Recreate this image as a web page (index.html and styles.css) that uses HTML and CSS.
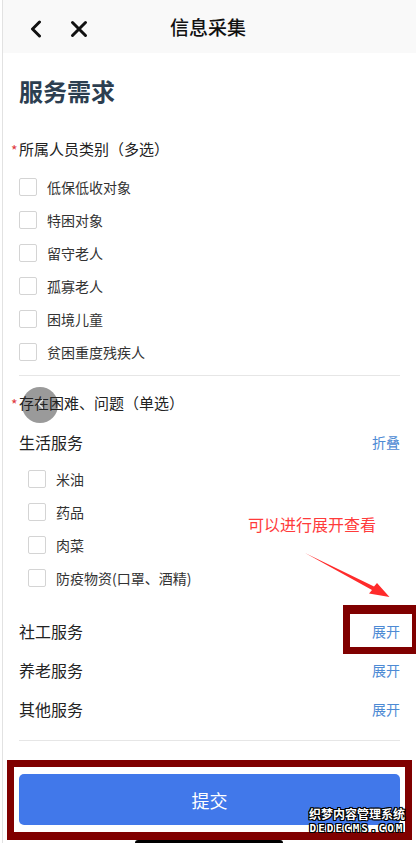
FILE: index.html
```html
<!DOCTYPE html>
<html>
<head>
  <meta charset="utf-8">
  <meta name="viewport" content="width=device-width, initial-scale=1">
  <title>信息采集</title>
  <link rel="stylesheet" href="styles.css">
</head>
<body>
  <div class="page">
    <div class="header">
      <button class="nav-btn back-btn" aria-label="返回">
        <svg width="14" height="18" viewBox="0 0 14 18"><path d="M10.5 2 L3.5 9 L10.5 16" fill="none" stroke="#111" stroke-width="3" stroke-linecap="round" stroke-linejoin="round"/></svg>
      </button>
      <button class="nav-btn close-btn" aria-label="关闭">
        <svg width="18" height="18" viewBox="0 0 18 18"><path d="M2.5 2.5 L15.5 15.5 M15.5 2.5 L2.5 15.5" fill="none" stroke="#111" stroke-width="3" stroke-linecap="round"/></svg>
      </button>
      <h1>信息采集</h1>
    </div>

    <div class="content">
      <h2 class="section-title">服务需求</h2>

      <div class="field-label"><span class="required">*</span>所属人员类别（多选）</div>
      <ul class="check-list">
        <li><span class="checkbox"></span>低保低收对象</li>
        <li><span class="checkbox"></span>特困对象</li>
        <li><span class="checkbox"></span>留守老人</li>
        <li><span class="checkbox"></span>孤寡老人</li>
        <li><span class="checkbox"></span>困境儿童</li>
        <li><span class="checkbox"></span>贫困重度残疾人</li>
      </ul>

      <div class="divider"></div>

      <div class="field-label label-second"><span class="required">*</span>存在困难、问题（单选）</div>

      <div class="group-row group-open">
        <span>生活服务</span>
        <a class="toggle">折叠</a>
      </div>
      <ul class="check-list sub-list">
        <li><span class="checkbox"></span>米油</li>
        <li><span class="checkbox"></span>药品</li>
        <li><span class="checkbox"></span>肉菜</li>
        <li><span class="checkbox"></span>防疫物资(口罩、酒精)</li>
      </ul>

      <div class="group-row first-closed">
        <span>社工服务</span>
        <a class="toggle">展开</a>
      </div>
      <div class="group-row">
        <span>养老服务</span>
        <a class="toggle">展开</a>
      </div>
      <div class="group-row">
        <span>其他服务</span>
        <a class="toggle">展开</a>
      </div>

      <div class="divider divider-bottom"></div>

      <div class="submit-wrap">
        <button class="submit-btn">提交</button>
      </div>
    </div>

    <!-- overlays -->
    <div class="touch-dot"></div>
    <svg class="touch-chevron" width="10" height="12" viewBox="0 0 10 12"><path d="M7 1.5 L2.5 6 L7 10.5" fill="none" stroke="#fff" stroke-width="1.4" opacity="0.8"/></svg>
    <div class="note">可以进行展开查看</div>
    <svg class="note-arrow" width="416" height="843" viewBox="0 0 416 843">
      <polygon points="305,553 374,586.5 377,583 389.5,597 369,593.5 372,590" fill="#ff2b2b"/>
    </svg>
    <div class="mark-box mark-toggle"></div>
    <div class="mark-box mark-submit"></div>
    <div class="watermark">
      <div class="wm-cn">织梦内容管理系统</div>
      <div class="wm-en">DEDECMS.COM</div>
    </div>
    <div class="home-bar"></div>
  </div>
</body>
</html>
```

FILE: styles.css
```css
html, body {
  margin: 0;
  padding: 0;
  background: #fff;
}

body {
  font-family: "Noto Sans CJK SC", "Noto Sans", sans-serif;
  color: #333;
  width: 416px;
  height: 843px;
  overflow: hidden;
}

.page {
  position: relative;
  z-index: 0;
  height: 843px;
  margin-left: 2px;
  border-left: 1px solid #e2e2e2;
}

.header {
  height: 53px;
  background: #f9f9f9;
  display: flex;
  align-items: center;
  position: relative;
}

.header h1 {
  position: absolute;
  left: 0;
  right: 0;
  margin: 0;
  text-align: center;
  font-size: 19px;
  font-weight: 500;
  color: #111;
  line-height: 53px;
  pointer-events: none;
  padding-right: 3px;
}

.nav-btn {
  background: none;
  border: none;
  padding: 0;
  display: flex;
  align-items: center;
  justify-content: center;
  cursor: pointer;
}

.back-btn {
  margin-left: 24px;
  width: 18px;
  height: 24px;
  margin-top: 4px;
}

.close-btn {
  margin-left: 24px;
  width: 20px;
  height: 24px;
  margin-top: 5px;
}

.content {
  padding: 0 14px 0 16px;
}

.section-title {
  margin: 22px 0 0;
  font-size: 24px;
  line-height: 32px;
  font-weight: 700;
  color: #2c3e50;
}

.field-label {
  position: relative;
  margin-top: 31px;
  font-size: 15px;
  line-height: 22px;
  color: #222;
}

.label-second {
  margin-top: 16px;
}

.required {
  position: absolute;
  left: -8px;
  top: 1px;
  color: #e0383e;
  font-size: 14px;
}

.check-list {
  list-style: none;
  margin: 10px 0 0;
  padding: 0;
}

.check-list li {
  height: 33px;
  display: flex;
  align-items: center;
  font-size: 14px;
  color: #333;
}

.checkbox {
  width: 16px;
  height: 16px;
  border: 1px solid #d4d4d4;
  border-radius: 2px;
  background: #fff;
  margin-right: 10px;
}

.divider {
  height: 1px;
  background: #e6e6e6;
  margin-top: 7px;
  margin-right: 2px;
}

.group-row {
  height: 39px;
  display: flex;
  align-items: center;
  justify-content: space-between;
  font-size: 16px;
  color: #222;
  padding-right: 2px;
}

.group-open {
  margin-top: 8px;
}

.first-closed {
  margin-top: 17px;
}

.toggle {
  font-size: 14px;
  color: #4d8ad4;
  cursor: pointer;
}

.sub-list {
  margin-top: 1px;
  padding-left: 9px;
}

.divider-bottom {
  margin-top: 12px;
}

.submit-wrap {
  padding-top: 33px;
  padding-right: 2px;
}

.submit-btn {
  width: 100%;
  height: 51px;
  border: none;
  border-radius: 5px;
  background: #4178ea;
  color: #fff;
  font-family: inherit;
  font-size: 18px;
  cursor: pointer;
}

/* overlays */
.touch-dot {
  position: absolute;
  z-index: -1;
  left: 19px;
  top: 387px;
  width: 36px;
  height: 36px;
  border-radius: 50%;
  background: #9a9a9a;
}

.touch-chevron {
  position: absolute;
  left: 33px;
  top: 398px;
}

.note {
  position: absolute;
  left: 245px;
  top: 513px;
  font-size: 16px;
  line-height: 22px;
  color: #ff3b3b;
}

.note-arrow {
  position: absolute;
  left: -3px;
  top: 0;
  pointer-events: none;
}

.mark-box {
  position: absolute;
  border: 7px solid #800000;
  box-sizing: border-box;
}

.mark-toggle {
  left: 340px;
  top: 605px;
  width: 76px;
  height: 49px;
  border-top-width: 9px;
}

.mark-submit {
  left: 4px;
  top: 760px;
  width: 405px;
  height: 80px;
  border-bottom-width: 8px;
}

.watermark {
  position: absolute;
  left: 301px;
  top: 806px;
  width: 106px;
  text-align: center;
  color: #fff;
  font-weight: 700;
  text-shadow: 1px 0 0 #000, -1px 0 0 #000, 0 1px 0 #000, 0 -1px 0 #000, 1px 1px 0 #000, -1px -1px 0 #000, 1px -1px 0 #000, -1px 1px 0 #000;
}

.wm-cn {
  font-size: 12px;
  line-height: 16px;
  letter-spacing: 0;
}

.wm-en {
  font-family: "DejaVu Sans Mono", monospace;
  font-size: 11px;
  line-height: 14px;
  letter-spacing: 2px;
}

.home-bar {
  position: absolute;
  left: 132px;
  top: 840px;
  width: 148px;
  height: 6px;
  border-radius: 3px;
  background: #000;
}
```
